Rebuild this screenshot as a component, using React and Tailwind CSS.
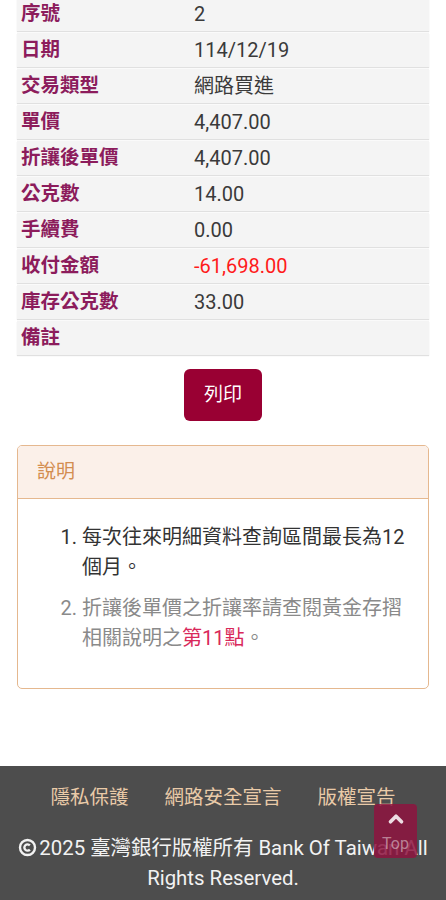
import { ChevronUp } from "lucide-react";

const rows = [
  { label: "序號", value: "2" },
  { label: "日期", value: "114/12/19" },
  { label: "交易類型", value: "網路買進" },
  { label: "單價", value: "4,407.00" },
  { label: "折讓後單價", value: "4,407.00" },
  { label: "公克數", value: "14.00" },
  { label: "手續費", value: "0.00" },
  { label: "收付金額", value: "-61,698.00", red: true },
  { label: "庫存公克數", value: "33.00" },
  { label: "備註", value: "" },
];

export default function App() {
  return (
    <div
      className="min-h-screen bg-white relative overflow-hidden"
      style={{ fontFamily: 'Roboto, "Noto Sans CJK TC", sans-serif' }}
    >
      {/* detail table */}
      <div className="mx-[17px] mt-[-3px] flex flex-col gap-[2px]">
        {rows.map((r) => (
          <div
            key={r.label}
            className="flex items-center h-[34px] bg-[#f4f4f4] shadow-[0_1px_1px_rgba(0,0,0,0.12)]"
          >
            <div className="w-[177px] pl-[4px] text-[19.5px] font-bold text-[#8c1c5c] leading-none">
              {r.label}
            </div>
            <div
              className={
                "flex-1 text-[20px] leading-none " +
                (r.red ? "text-[#ff1a1a]" : "text-[#3a3a3a]")
              }
            >
              {r.value}
            </div>
          </div>
        ))}
      </div>

      {/* print button */}
      <div className="flex justify-center mt-[14px]">
        <button className="w-[78px] h-[52px] rounded-[6px] bg-[#990033] text-white text-[19px]">
          列印
        </button>
      </div>

      {/* notes panel */}
      <div className="mx-[17px] mt-[24px] border border-[#e5b88f] rounded-[5px] overflow-hidden">
        <div className="h-[53px] flex items-center px-[19px] bg-[#fbf0e9] border-b border-[#e5b88f] text-[19px] text-[#d38d50]">
          說明
        </div>
        <div className="px-[20px] pt-[23px] pb-[35px]">
          <ol className="list-decimal pl-[44px] text-[20px] leading-[30px]">
            <li className="text-[#333333]">每次往來明細資料查詢區間最長為12個月。</li>
            <li className="mt-[11px] text-[#8a8a8a]">
              折讓後單價之折讓率請查閱黃金存摺相關說明之
              <span className="text-[#d9285a]">第11點</span>。
            </li>
          </ol>
        </div>
      </div>

      {/* footer */}
      <footer className="mt-[77px] bg-[#4d4d4d] pt-[17px] pb-[20px]">
        <div className="flex justify-center gap-[36px] text-[19.5px] leading-[30px] text-[#e9caa8]">
          <span>隱私保護</span>
          <span>網路安全宣言</span>
          <span>版權宣告</span>
        </div>
        <p className="mt-[20px] px-[14px] text-center text-[20.4px] leading-[30px] text-[#f2f2f2]">
          <svg
            viewBox="0 0 24 24"
            className="inline-block w-[19px] h-[19px] align-[-2px] mr-[2px]"
            fill="none"
            stroke="currentColor"
            strokeWidth="3"
          >
            <circle cx="12" cy="12" r="9.5" />
            <path d="M15 9.3a4 4 0 1 0 0 5.4" />
          </svg>
          2025 臺灣銀行版權所有 Bank Of Taiwan All Rights Reserved.
        </p>
      </footer>

      {/* back to top */}
      <div className="absolute left-[374px] top-[804px] w-[43px] h-[54px] rounded-[4px] bg-[#8e1440]/85 flex flex-col items-center pt-[4px]">
        <ChevronUp className="w-[22px] h-[22px] text-white/85" strokeWidth={4} />
        <span className="text-[16px] leading-none mt-[6px] text-white/45">Top</span>
      </div>
    </div>
  );
}
